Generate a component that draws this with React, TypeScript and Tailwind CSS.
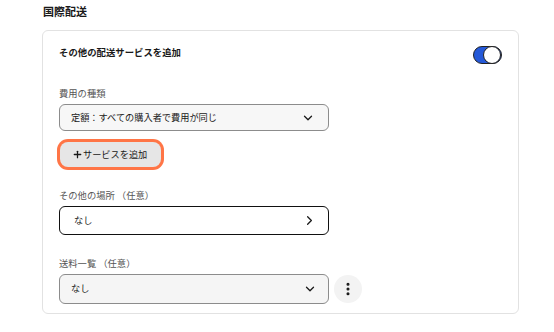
import { ChevronDown, ChevronRight, EllipsisVertical, Plus } from "lucide-react";

const FONT = { fontFamily: '"Noto Sans CJK JP", "Noto Sans", sans-serif' };

function Label({ children }: { children: React.ReactNode }) {
  return <div className="text-[9.3px] leading-[14px] text-[#555]">{children}</div>;
}

export default function App() {
  return (
    <div className="h-[332px] w-[554px] bg-white text-[#191919]" style={FONT}>
      <div className="pl-[42px] pr-[35px] pt-px">
        <h2 className="pl-px text-[11px] font-bold leading-[20px]">国際配送</h2>

        <div className="mt-[9px] rounded-md border border-[#e2e2e2] px-[16px] pb-[9px] pt-[13px]">
          <div className="flex items-start justify-between">
            <h3 className="text-[9.4px] font-bold leading-[16px]">その他の配送サービスを追加</h3>
            <div className="mt-[2px] flex h-[18px] w-[29px] items-center justify-end rounded-full border border-[#222] bg-[#2559d8]">
              <div className="h-[18px] w-[18px] rounded-full border border-[#222] bg-white" />
            </div>
          </div>

          <div className="mt-[22px]">
            <Label>費用の種類</Label>
          </div>
          <button className="mt-[4px] flex h-[27px] w-[270px] items-center justify-between rounded-md border border-[#8c8c8c] bg-[#f7f7f7] pl-[11px] pr-[13px] text-[9.2px]">
            <span>定額：すべての購入者で費用が同じ</span>
            <ChevronDown className="h-[14px] w-[14px]" strokeWidth={2.2} />
          </button>

          <button className="ml-px mt-[11px] flex h-[25px] w-[101px] items-center rounded-[8px] bg-[#e6e6e6] pl-[12px] text-[9.2px] shadow-[0_0_0_3px_#ff7546]">
            <Plus className="h-[11px] w-[11px]" strokeWidth={2.8} />
            <span>サービスを追加</span>
          </button>

          <div className="mt-[21px]">
            <Label>その他の場所 （任意）</Label>
          </div>
          <button className="mt-[4px] flex h-[29px] w-[270px] items-center justify-between rounded-md border-[1.5px] border-[#111] bg-white pl-[14px] pr-[11px] text-[9.2px]">
            <span>なし</span>
            <ChevronRight className="h-[15px] w-[15px]" strokeWidth={2} />
          </button>

          <div className="mt-[21px]">
            <Label>送料一覧 （任意）</Label>
          </div>
          <div className="mt-[4px] flex items-center gap-[5px]">
            <button className="flex h-[30px] w-[270px] items-center justify-between rounded-md border border-[#8c8c8c] bg-[#f5f5f5] pl-[11px] pr-[11px] text-[9.2px]">
              <span>なし</span>
              <ChevronDown className="h-[14px] w-[14px]" strokeWidth={2.2} />
            </button>
            <button className="flex h-[28px] w-[28px] items-center justify-center rounded-full bg-[#f3f3f3]">
              <EllipsisVertical className="h-[16px] w-[16px]" strokeWidth={2.6} />
            </button>
          </div>
        </div>
      </div>
    </div>
  );
}
